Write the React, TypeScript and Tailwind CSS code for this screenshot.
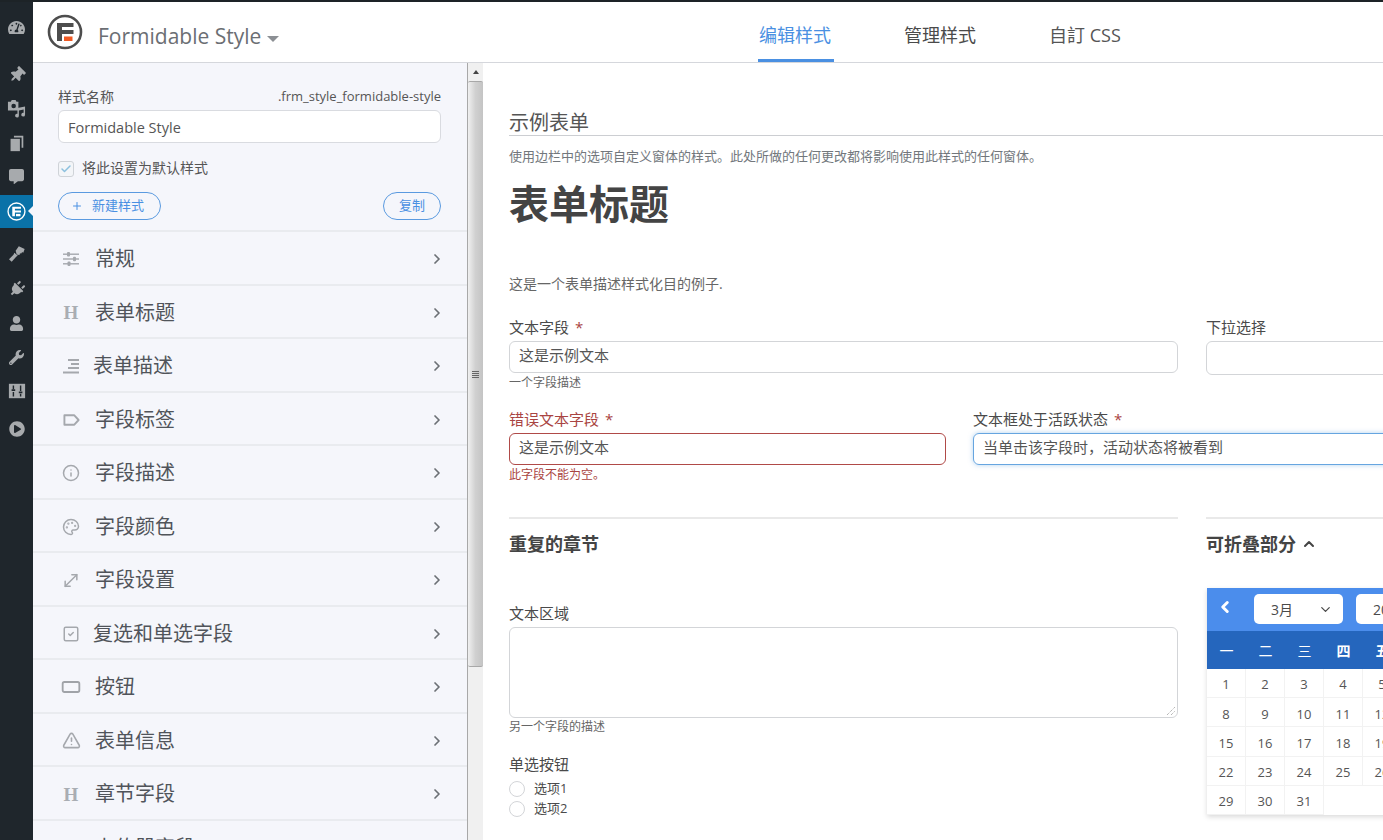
import { Check, ChevronDown, ChevronLeft, ChevronRight, ChevronUp, Info, Palette, Plus, RectangleHorizontal, SquareCheck, TriangleAlert, MoveDiagonal } from "lucide-react";
import { FaCommentAlt, FaPlayCircle, FaPlug, FaThumbtack, FaUser, FaWrench, FaTachometerAlt } from "react-icons/fa";
import type { ReactNode } from "react";

const FormidableMark = ({ light }: { light?: boolean }) => (
  <svg viewBox="0 0 36 36" className="w-full h-full">
    <circle cx="18" cy="18" r="16" fill="none" stroke={light ? "#fff" : "#4d4d4d"} strokeWidth="2.6" />
    <path d="M10 9h16.5v4H15v3h11.5v4H15v7h-5z" fill={light ? "#fff" : "#4d4d4d"} />
    <rect x="17" y="22.5" width="8.5" height="4.5" fill={light ? "#fff" : "#f05a24"} />
  </svg>
);

const HIcon = () => <span className="font-['Liberation_Serif',serif] font-bold text-[19px] leading-none text-[#a9adb3]">H</span>;

const LinesIcon = () => (
  <svg viewBox="0 0 16 16" className="w-[16px] h-[16px]" stroke="#a5a8ad" strokeWidth="1.8">
    <path d="M5 2h11M8 6h8M5 10h11M0 14.5h16" />
  </svg>
);

const TagIcon = () => (
  <svg viewBox="0 0 18 14" className="w-[17px] h-[14px]" fill="none" stroke="#a5a8ad" strokeWidth="2" strokeLinejoin="round">
    <path d="M1.5 2h10.5l4.5 5-4.5 5H1.5z" />
  </svg>
);

const SlidersIcon = () => (
  <svg viewBox="0 0 16 14" className="w-[16px] h-[14px]" fill="#a5a8ad">
    <rect x="0" y="1.5" width="16" height="1.4" />
    <rect x="0" y="6.3" width="16" height="1.4" />
    <rect x="0" y="11.1" width="16" height="1.4" />
    <rect x="4" y="0" width="3" height="4.4" rx="1" />
    <rect x="10" y="4.8" width="3" height="4.4" rx="1" />
    <rect x="4.5" y="9.6" width="3" height="4.4" rx="1" />
  </svg>
);

// wp admin icons that the packages don't have
const MediaIcon = () => (
  <svg viewBox="0 0 20 20" className="w-[19px] h-[19px]" fill="currentColor">
    <path fillRule="evenodd" d="M5 1h4l1 2h2v9H1V3h3zM7 5a2.4 2.4 0 1 0 0 4.8A2.4 2.4 0 0 0 7 5z" />
    <path d="M19 8v8.5a2 2 0 1 1-1.5-1.9V11l-5 1.2v5.3a2 2 0 1 1-1.5-1.9V9.6z" />
  </svg>
);

const PagesIcon = () => (
  <svg viewBox="0 0 20 20" className="w-[17px] h-[17px]" fill="currentColor">
    <path d="M7 1h11v14h-2V3H7z" />
    <path d="M3 4.5h11V19H3z" />
  </svg>
);

const BrushIcon = () => (
  <svg viewBox="0 0 20 20" className="w-[18px] h-[18px]" fill="currentColor">
    <path d="M12 1.5l6.5 3-1.5 4-1.5-.7-.3 1.5-2 .2-.4 1.6-2.3-.2-1-1-1-3.6z" />
    <path d="M7 8.5l3.8 3.3-1.7 1.2-5 5.5-3-2.7 5-5z" />
  </svg>
);

const SettingsIcon = () => (
  <svg viewBox="0 0 20 20" className="w-[18px] h-[18px]">
    <rect x="1" y="2" width="18" height="16" fill="currentColor" />
    <path d="M6 4v4M6 11v5M14 4v6M14 13v3" stroke="#1f262c" strokeWidth="1.6" />
    <path d="M4 9h4M12 11.5h4" stroke="#1f262c" strokeWidth="2" />
  </svg>
);

const iconCls = "w-[18px] h-[18px] text-[#a5a8ad]";

const rows: { label: string; icon: ReactNode; tight?: boolean }[] = [
  { label: "常规", icon: <SlidersIcon /> },
  { label: "表单标题", icon: <HIcon /> },
  { label: "表单描述", icon: <LinesIcon />, tight: true },
  { label: "字段标签", icon: <TagIcon /> },
  { label: "字段描述", icon: <Info className={iconCls} strokeWidth={2} /> },
  { label: "字段颜色", icon: <Palette className={iconCls} strokeWidth={2} /> },
  { label: "字段设置", icon: <MoveDiagonal className="w-[21px] h-[21px] text-[#a5a8ad]" strokeWidth={1.8} /> },
  { label: "复选和单选字段", icon: <SquareCheck className={iconCls} strokeWidth={2} />, tight: true },
  { label: "按钮", icon: <RectangleHorizontal className="w-[20px] h-[20px] text-[#a0a3a8]" strokeWidth={2.2} /> },
  { label: "表单信息", icon: <TriangleAlert className="w-[19px] h-[19px] text-[#a5a8ad]" strokeWidth={2} /> },
  { label: "章节字段", icon: <HIcon /> },
  { label: "上传器字段", icon: null },
];

const menu: { icon: ReactNode; cls: string }[] = [
  { icon: <FaTachometerAlt size={17} />, cls: "mt-[8px]" },
  { icon: <FaThumbtack size={16} className="rotate-45" />, cls: "mt-[14px]" },
  { icon: <MediaIcon />, cls: "-mt-px" },
  { icon: <PagesIcon />, cls: "mt-px" },
  { icon: <FaCommentAlt size={15} />, cls: "-mt-px" },
];

const menu2: { icon: ReactNode; cls: string }[] = [
  { icon: <BrushIcon />, cls: "mt-[9px]" },
  { icon: <FaPlug size={16} className="rotate-45" />, cls: "mt-px" },
  { icon: <FaUser size={15} />, cls: "" },
  { icon: <FaWrench size={15} />, cls: "" },
  { icon: <SettingsIcon />, cls: "" },
  { icon: <FaPlayCircle size={16} />, cls: "mt-[4px]" },
];

const days = [
  [1, 2, 3, 4, 5],
  [8, 9, 10, 11, 12],
  [15, 16, 17, 18, 19],
  [22, 23, 24, 25, 26],
  [29, 30, 31, 0, 0],
];

const Star = () => <span className="ml-[6px] text-[#a94442]">*</span>;

export default function App() {
  return (
    <div className="h-[840px] w-[1383px] overflow-hidden flex flex-col bg-white font-['Open_Sans','Noto_Sans_CJK_SC',sans-serif] text-[#4a4a4a]">
      <div className="h-[2px] shrink-0 bg-[#1d2327]" />
      <div className="flex flex-1 min-h-0">
        {/* wp admin menu */}
        <div className="w-[33px] shrink-0 bg-[#1f262c] flex flex-col text-[#a7aaad]">
          {menu.map((m, i) => (
            <div key={i} className={"h-[34px] flex items-center justify-center " + m.cls}>{m.icon}</div>
          ))}
          <div className="relative h-[33px] mt-[2px] bg-[#0a72a8] flex items-center justify-center">
            <div className="w-[19px] h-[19px]"><FormidableMark light /></div>
            <div className="absolute right-0 top-[11px] border-y-[5px] border-r-[5px] border-y-transparent border-r-[#f5f6fb]" />
          </div>
          {menu2.map((m, i) => (
            <div key={i} className={"h-[34px] flex items-center justify-center " + m.cls}>{m.icon}</div>
          ))}
        </div>

        <div className="flex-1 min-w-0 flex flex-col">
          {/* top bar */}
          <div className="h-[61px] shrink-0 flex border-b border-[#d5d7dc]">
            <div className="w-[725px] flex items-center pl-[14px] pb-[1px]">
              <div className="w-[36px] h-[36px]"><FormidableMark /></div>
              <span className="ml-[15px] mt-[10px] text-[21px] leading-none text-[#6b6e73]">Formidable Style</span>
              <span className="ml-[6px] mt-[14px] border-x-[6px] border-t-[6px] border-x-transparent border-t-[#8c8f94]" />
            </div>
            <div className="flex text-[18px]">
              <div className="w-[76px] pt-[20px] pr-[2px] text-center text-[#4a90e2] border-b-[3px] border-[#4a90e2] leading-[26px]">编辑样式</div>
              <div className="ml-[70px] pt-[20px] leading-[26px]">管理样式</div>
              <div className="ml-[73px] pt-[20px] leading-[26px] text-[#555]">自訂 CSS</div>
            </div>
          </div>

          <div className="flex flex-1 min-h-0">
            {/* style sidebar */}
            <div className="w-[434px] shrink-0 bg-[#f5f6fb] overflow-hidden">
              <div className="h-[167px] pl-[25px] pr-[26px] pt-[25px] flex flex-col">
                <div className="flex justify-between items-center h-[18px] text-[14px] text-[#555]">
                  <span className="pb-[2px]">样式名称</span>
                  <span className="text-[13px]">.frm_style_formidable-style</span>
                </div>
                <div className="mt-[4px] h-[33px] shrink-0 rounded-[6px] border border-[#d9dbe0] bg-white px-[9px] pt-[2px] flex items-center text-[14.5px] text-[#555]">Formidable Style</div>
                <div className="mt-[18px] flex items-center text-[14px] text-[#555] h-[16px]">
                  <span className="w-[16px] h-[16px] rounded-[3px] border border-[#cfd3d8] bg-[#f3f5f8] flex items-center justify-center">
                    <Check size={12} strokeWidth={3} className="text-[#8cc0de]" />
                  </span>
                  <span className="ml-[8px] pb-[4px]">将此设置为默认样式</span>
                </div>
                <div className="mt-[15px] flex justify-between">
                  <div className="h-[28px] w-[103px] rounded-full border border-[#5a9ae0] flex items-center pl-[12px] text-[13px] text-[#4a90e2]">
                    <Plus size={12} strokeWidth={2} />
                    <span className="ml-[9px]">新建样式</span>
                  </div>
                  <div className="h-[28px] w-[58px] rounded-full border border-[#5a9ae0] flex items-center justify-center text-[13px] text-[#4a90e2]">复制</div>
                </div>
              </div>
              {rows.map((r) => (
                <div key={r.label} className="h-[53.5px] border-t-2 border-[#e9ebef] flex items-center pt-[3px] pl-[28px] pr-[22px]">
                  <div className="w-[20px] flex items-center justify-center">{r.icon}</div>
                  <span className={"text-[20px] leading-none text-[#50545a] " + (r.tight ? "ml-[12px]" : "ml-[14px]")}>{r.label}</span>
                  <ChevronRight size={16} strokeWidth={2.6} className="ml-auto text-[#6c7075]" />
                </div>
              ))}
            </div>

            {/* scrollbar */}
            <div className="w-[16px] shrink-0 border-l border-[#a8a8a8] bg-[#f0f0f0] flex flex-col items-center">
              <div className="h-[18px] flex items-center justify-center">
                <span className="border-x-[3px] border-b-[4px] border-x-transparent border-b-[#444]" />
              </div>
              <div className="h-[586px] w-full rounded-[2px] border-y border-[#a8a8a8] bg-gradient-to-r from-[#f0f0f0] via-[#d0d0d0] to-[#c4c4c4] flex flex-col items-center justify-center gap-[1px] pr-[1px]">
                <span className="w-[7px] h-px bg-[#666]" />
                <span className="w-[7px] h-px bg-[#666]" />
                <span className="w-[7px] h-px bg-[#666]" />
                <span className="w-[7px] h-px bg-[#666]" />
              </div>
            </div>

            {/* preview */}
            <div className="flex-1 min-w-0 overflow-hidden pl-[26px] text-[15px]">
              <div className="w-[1020px]">
                <div className="mt-[46px] h-[27px] border-b border-[#ccced2] text-[20px] leading-[28px] text-[#555]">示例表单</div>
                <p className="mt-[11px] text-[13px] leading-[18px] text-[#72777c]">使用边栏中的选项自定义窗体的样式。此处所做的任何更改都将影响使用此样式的任何窗体。</p>
                <h1 className="mt-[14px] text-[40px] leading-[50px] font-bold text-[#444]">表单标题</h1>
                <p className="mt-[45px] text-[14px] leading-[20px] text-[#666]">这是一个表单描述样式化目的例子.</p>

                <div className="mt-[24px] flex gap-[28px]">
                  <div className="w-[669px]">
                    <div className="leading-[18px] h-[20px]">文本字段<Star /></div>
                    <div className="mt-[3px] h-[32px] rounded-[6px] border border-[#d3d5d8] px-[9px] pb-[4px] flex items-center text-[#555]">这是示例文本</div>
                    <div className="mt-[2px] text-[12px] leading-[16px] text-[#666]">一个字段描述</div>
                  </div>
                  <div className="flex-1">
                    <div className="leading-[18px] h-[20px]">下拉选择</div>
                    <div className="mt-[3px] h-[34px] rounded-[6px] border border-[#d3d5d8]" />
                  </div>
                </div>

                <div className="mt-[19px] flex gap-[27px]">
                  <div className="w-[437px]">
                    <div className="leading-[18px] h-[20px] text-[#a94442]">错误文本字段<Star /></div>
                    <div className="mt-[3px] h-[32px] rounded-[6px] border border-[#b04a48] px-[9px] pb-[4px] flex items-center text-[#555]">这是示例文本</div>
                    <div className="mt-[2px] text-[12px] leading-[16px] text-[#a94442]">此字段不能为空。</div>
                  </div>
                  <div className="flex-1">
                    <div className="leading-[18px] h-[20px]">文本框处于活跃状态<Star /></div>
                    <div className="mt-[3px] h-[32px] rounded-[6px] border border-[#66a5e0] shadow-[0_0_5px_rgba(102,165,224,0.5)] px-[9px] pb-[4px] flex items-center text-[#555]">当单击该字段时，活动状态将被看到</div>
                  </div>
                </div>

                <div className="mt-[34px] flex gap-[28px]">
                  <div className="w-[669px]">
                    <div className="border-t-2 border-[#e9e9e9] pt-[12px] text-[18px] leading-[26px] font-bold text-[#444]">重复的章节</div>
                    <div className="mt-[47px] leading-[18px] h-[20px]">文本区域</div>
                    <div className="relative mt-[3px] h-[91px] rounded-[6px] border border-[#d3d5d8]">
                      <svg viewBox="0 0 10 10" className="absolute right-[1px] bottom-[1px] w-[10px] h-[10px]" stroke="#999" strokeWidth="1" strokeDasharray="1 1">
                        <path d="M1 9 9 1M5 9 9 5" />
                      </svg>
                    </div>
                    <div className="mt-[1px] text-[12px] leading-[16px] text-[#666]">另一个字段的描述</div>
                    <div className="mt-[19px] leading-[20px] h-[20px]">单选按钮</div>
                    <div className="mt-[5px] h-[20px] flex items-center text-[13px]">
                      <span className="w-[16px] h-[16px] rounded-full border border-[#d3d5d8]" />
                      <span className="ml-[9px]">选项1</span>
                    </div>
                    <div className="h-[20px] flex items-center text-[13px]">
                      <span className="w-[16px] h-[16px] rounded-full border border-[#d3d5d8]" />
                      <span className="ml-[9px]">选项2</span>
                    </div>
                    <div className="mt-[19px] leading-[20px] h-[20px]">复选框</div>
                  </div>

                  <div className="flex-1">
                    <div className="border-t-2 border-[#e9e9e9] pt-[12px] text-[18px] leading-[26px] font-bold text-[#444] flex items-center">
                      可折叠部分
                      <ChevronUp size={16} strokeWidth={3} className="ml-[5px]" />
                    </div>
                    <div className="mt-[31px] ml-px w-[300px] shadow-[0_2px_5px_rgba(0,0,0,0.15)]">
                      <div className="h-[43px] bg-[#4b8dec] flex items-start pt-[6px]">
                        <ChevronLeft size={18} strokeWidth={4} className="ml-[9px] mt-[4px] text-white" />
                        <div className="ml-[20px] w-[89px] h-[30px] rounded-[5px] bg-white flex items-center justify-between pl-[17px] pr-[10px] text-[14px]">
                          3月
                          <ChevronDown size={15} strokeWidth={2} />
                        </div>
                        <div className="ml-[13px] w-[89px] h-[30px] rounded-[5px] bg-white flex items-center pl-[17px] text-[14px]">2019</div>
                      </div>
                      <div className="h-[38px] bg-[#2566bd] grid grid-cols-[repeat(7,39px)] items-center text-white text-center text-[14px]">
                        <span>一</span>
                        <span>二</span>
                        <span>三</span>
                        <span className="font-bold">四</span>
                        <span className="font-bold">五</span>
                      </div>
                      <div className="grid grid-cols-[repeat(7,39px)] auto-rows-[29.2px] text-[13px] text-[#555] bg-white">
                        {days.flatMap((w, wi) =>
                          [...w, 0, 0].map((d, di) => (
                            <span key={wi + "-" + di} className={"flex items-center justify-center pt-[4px] " + (d ? "border-r border-b border-[#f2f2f2]" : wi === 4 ? "" : "border-b border-[#f2f2f2]")}>
                              {d || ""}
                            </span>
                          )),
                        )}
                      </div>
                    </div>
                  </div>
                </div>
              </div>
            </div>
          </div>
        </div>
      </div>
    </div>
  );
}
